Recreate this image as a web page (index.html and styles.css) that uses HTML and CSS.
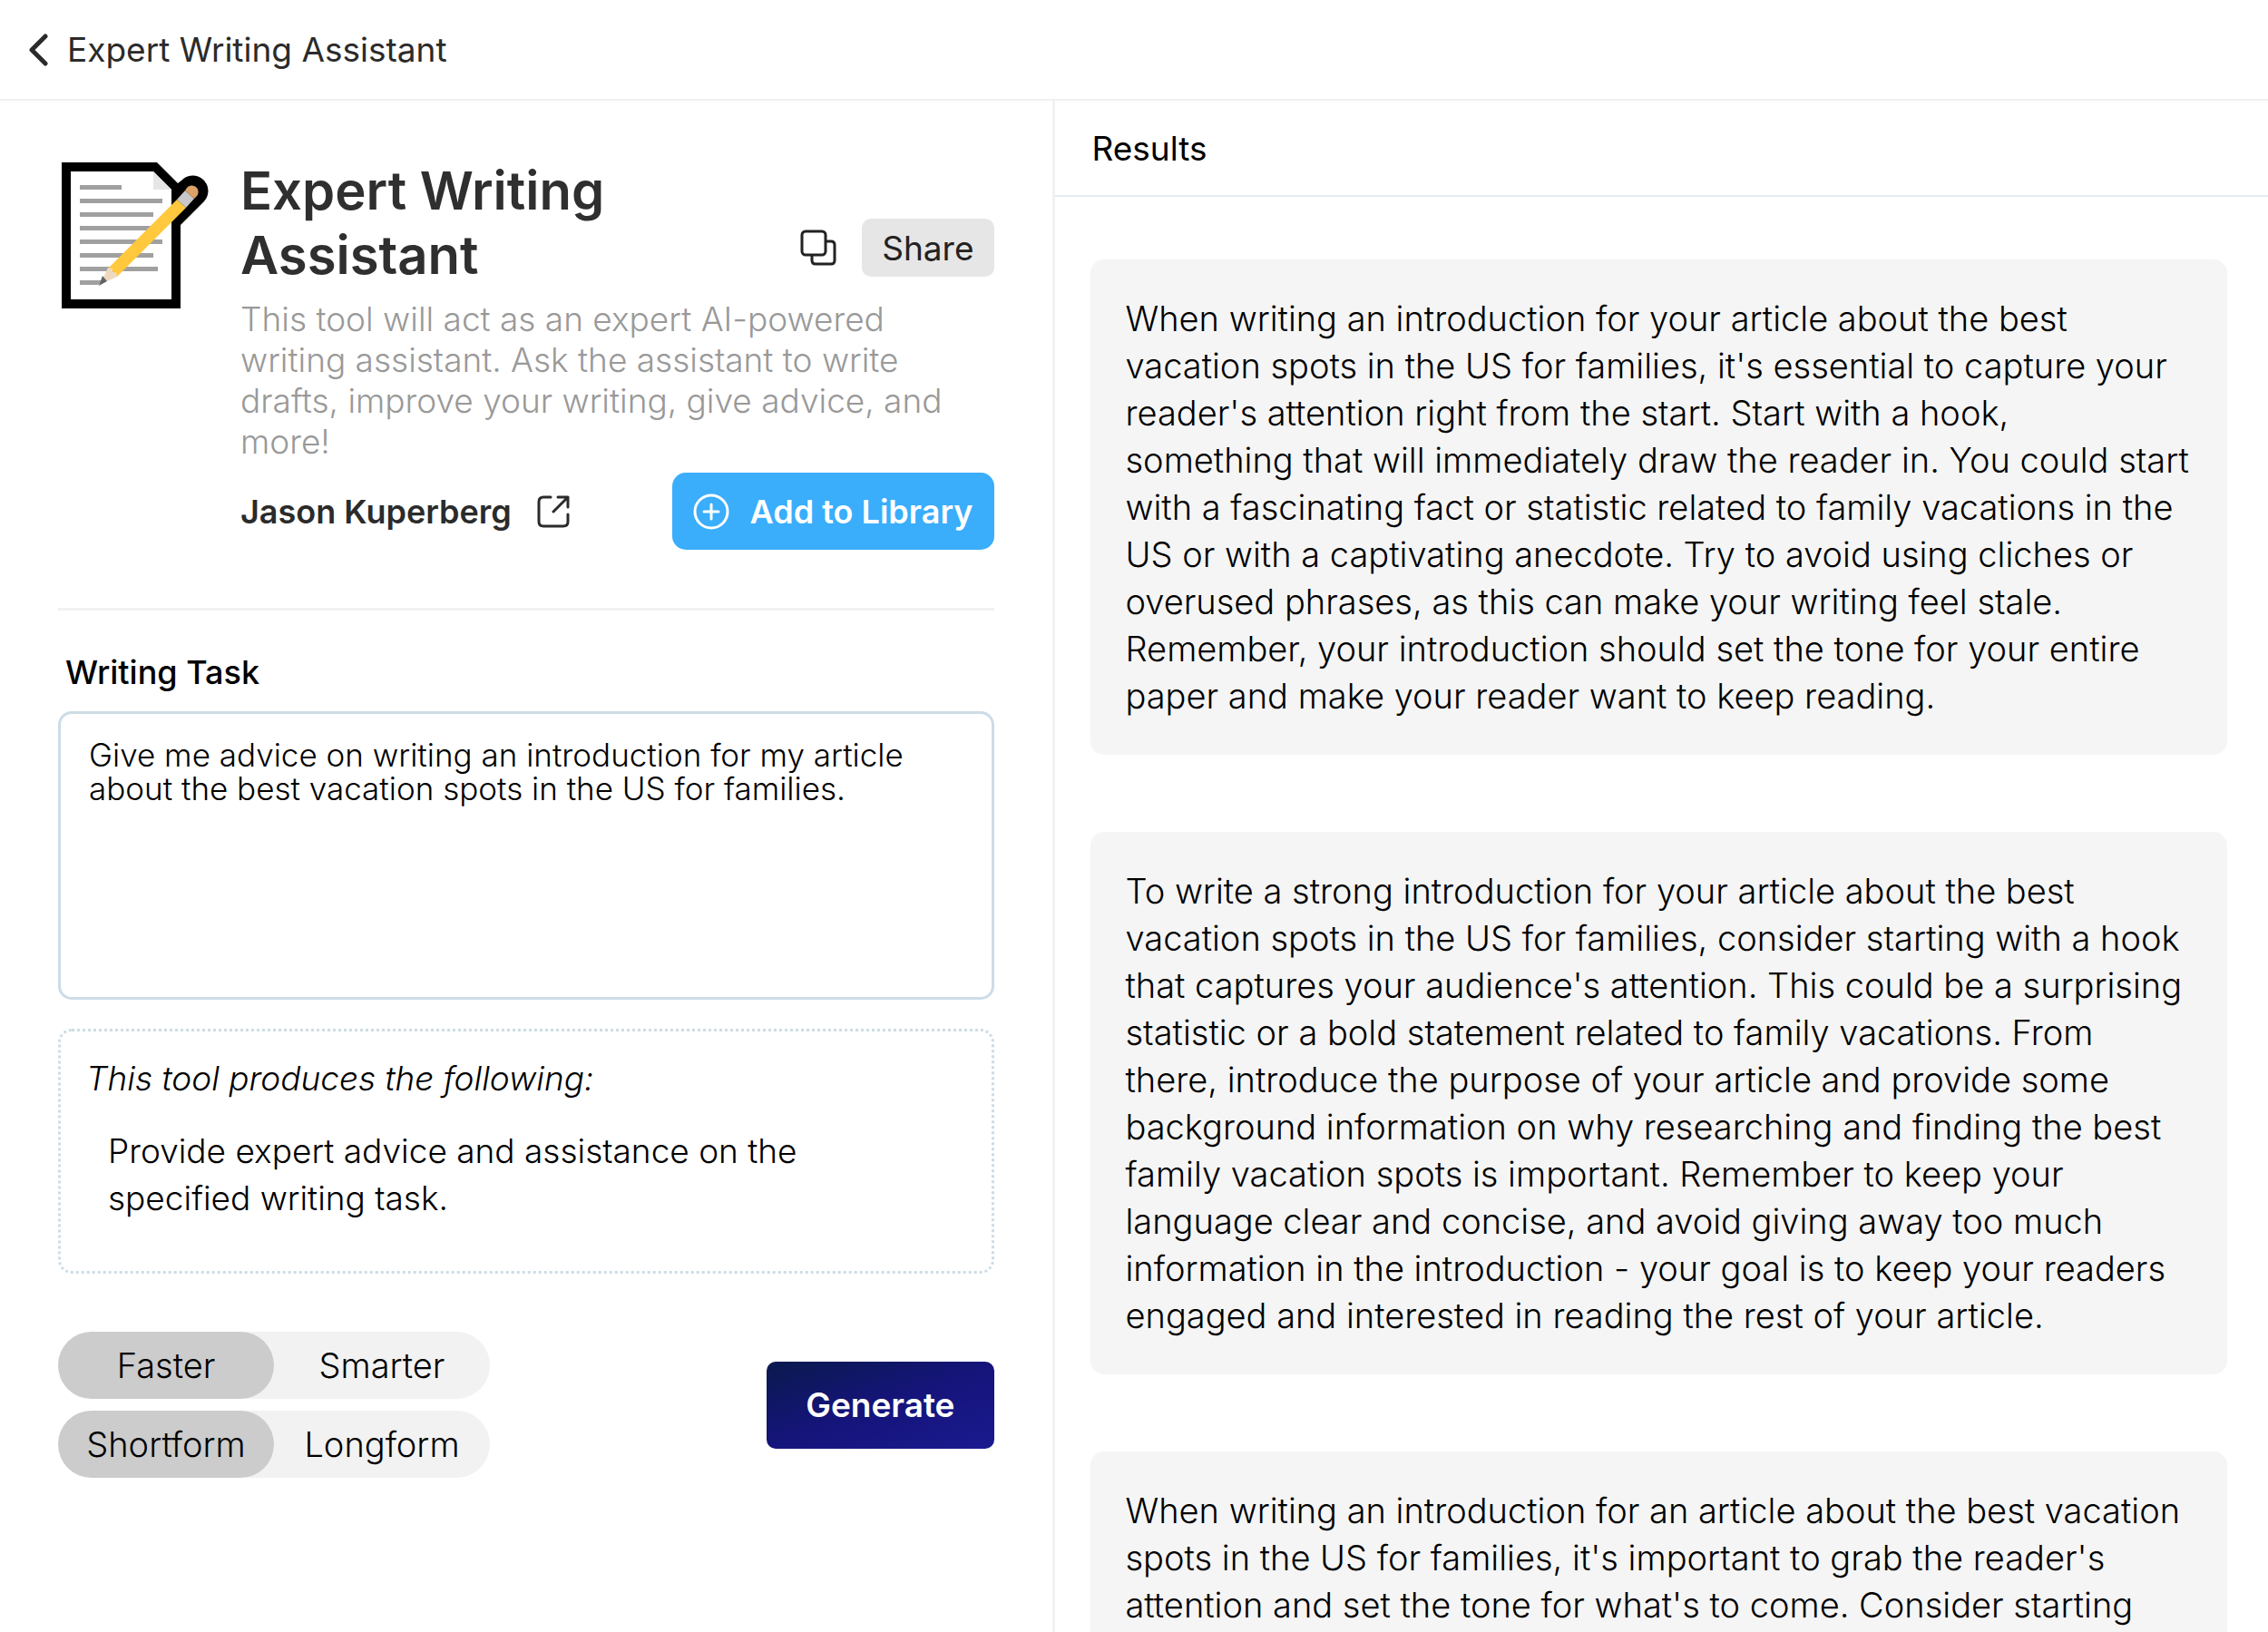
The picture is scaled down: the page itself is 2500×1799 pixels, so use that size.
FILE: index.html
```
<!DOCTYPE html>
<html lang="en">
<head>
    <meta charset="UTF-8">
    <meta name="viewport" content="width=device-width, initial-scale=1.0">
    <title>Expert Writing Assistant</title>
    <link rel="stylesheet" href="styles.css">
</head>
<body>

    <header class="topbar">
        <a href="#" class="back-link">
            <svg class="back-icon" viewBox="0 0 22 36" aria-hidden="true">
                <path d="M19 3 L4 18 L19 33" fill="none" stroke="currentColor" stroke-width="5" stroke-linecap="round" stroke-linejoin="round"/>
            </svg>
            <span>Expert Writing Assistant</span>
        </a>
    </header>

    <main class="layout">
        <section class="tool-panel">
            <div class="tool-header">
                <!-- Memo icon -->
                <svg class="tool-icon" viewBox="0 0 166 166" aria-hidden="true">
                    <path d="M4 4 H109 L132 27 L136 24 A16 16 0 0 1 161 47 L135 73 V165 H4 Z" fill="#000"/>
                    <path d="M14 14 H105 L125 34 V155 H14 Z" fill="#fff"/>
                    <path d="M105 14 L125 34 H105 Z" fill="#e6e6e6"/>
                    <path d="M24 29H70V34H24z M24 44H115V49H24z M24 59H105V64H24z M24 74H105V79H24z M24 89H115V94H24z M24 104H105V109H24z M24 119H110V124H24z M24 134H48L45 139H24z" fill="#a0a0a0"/>
                    <path d="M55 121 L131 45 L141 54 L65 130 Z" fill="#ffc83d"/>
                    <path d="M131 45 L140 35 L150 44 L141 54 Z" fill="#c8c8c8"/>
                    <path d="M140 35 L142 32 A7 7 0 0 1 153 41 L150 44 Z" fill="#dca267"/>
                    <path d="M49 133 L55 120 L60 121 L60 125 L64 125 L65 130 L54 135 Z" fill="#efd8c0"/>
                    <path d="M45 140 L49 129 L54 135 Z" fill="#636363"/>
                </svg>

                <div class="tool-info">
                    <div class="title-row">
                        <h1>Expert Writing Assistant</h1>
                        <div class="title-actions">
                            <button type="button" class="icon-btn" aria-label="Copy">
                                <svg class="copy-icon" viewBox="0 0 40 40" fill="none" stroke="currentColor" stroke-width="3" aria-hidden="true">
                                    <rect x="2" y="2" width="26" height="26" rx="4"/>
                                    <path d="M28 13 H34 Q38 13 38 17 V34 Q38 38 34 38 H17 Q13 38 13 34 V28"/>
                                </svg>
                            </button>
                            <button type="button" class="share-btn">Share</button>
                        </div>
                    </div>

                    <p class="description">This tool will act as an expert AI-powered writing assistant. Ask the assistant to write drafts, improve your writing, give advice, and more!</p>

                    <div class="author-row">
                        <a href="#" class="author">
                            <span>Jason Kuperberg</span>
                            <svg class="link-icon" viewBox="0 0 36 36" fill="none" stroke="currentColor" stroke-width="3" stroke-linecap="round" stroke-linejoin="round" aria-hidden="true">
                                <path d="M15 2 H7 Q2 2 2 7 V29 Q2 34 7 34 H29 Q34 34 34 29 V21"/>
                                <path d="M23 2 H34 V13 M34 2 L18 18"/>
                            </svg>
                        </a>
                        <button type="button" class="library-btn">
                            <svg class="plus-icon" viewBox="0 0 40 40" fill="none" stroke="currentColor" stroke-width="3" stroke-linecap="round" aria-hidden="true">
                                <circle cx="20" cy="20" r="18"/>
                                <path d="M20 12 V28 M12 20 H28"/>
                            </svg>
                            <span>Add to Library</span>
                        </button>
                    </div>
                </div>
            </div>

            <form class="tool-form">
                <label class="task-label" for="task">Writing Task</label>
                <textarea id="task" name="task">Give me advice on writing an introduction for my article about the best vacation spots in the US for families.</textarea>

                <div class="produces">
                    <p class="produces-title">This tool produces the following:</p>
                    <p class="produces-text">Provide expert advice and assistance on the specified writing task.</p>
                </div>

                <div class="form-footer">
                    <div class="toggles">
                        <div class="toggle">
                            <input type="radio" id="faster" name="speed" checked>
                            <label for="faster">Faster</label>
                            <input type="radio" id="smarter" name="speed">
                            <label for="smarter">Smarter</label>
                        </div>
                        <div class="toggle">
                            <input type="radio" id="shortform" name="length" checked>
                            <label for="shortform">Shortform</label>
                            <input type="radio" id="longform" name="length">
                            <label for="longform">Longform</label>
                        </div>
                    </div>
                    <button type="submit" class="generate-btn">Generate</button>
                </div>
            </form>
        </section>

        <section class="results-panel">
            <h2>Results</h2>
            <div class="results">
                <article class="result">When writing an introduction for your article about the best vacation spots in the US for families, it's essential to capture your reader's attention right from the start. Start with a hook,<br> something that will immediately draw the reader in. You could start with a fascinating fact or statistic related to family vacations in the US or with a captivating anecdote. Try to avoid using cliches or overused phrases, as this can make your writing feel stale. Remember, your introduction should set the tone for your entire paper and make your reader want to keep reading.</article>
                <article class="result">To write a strong introduction for your article about the best vacation spots in the US for families, consider starting with a hook that captures your audience's attention. This could be a surprising statistic or a bold statement related to family vacations. From<br> there, introduce the purpose of your article and provide some background information on why researching and finding the best family vacation spots is important. Remember to keep your language clear and concise, and avoid giving away too much information in the introduction - your goal is to keep your readers engaged and interested in reading the rest of your article.</article>
                <article class="result">When writing an introduction for an article about the best vacation spots in the US for families, it's important to grab the reader's attention and set the tone for what's to come. Consider starting</article>
            </div>
        </section>
    </main>

</body>
</html>
```

FILE: styles.css
```
/* Base styles */
* {
    box-sizing: border-box;
}

body {
    font-family: 'Inter', sans-serif;
    font-optical-sizing: none;
    font-size: 37px;
    font-weight: 300;
    color: #000;
    background: #fff;
    margin: 0;
    height: 100vh;
    display: flex;
    flex-direction: column;
    overflow: hidden;
}

h1, h2, p {
    margin: 0;
}

button, textarea {
    font: inherit;
    color: inherit;
}

button {
    border: none;
    cursor: pointer;
}

a {
    color: inherit;
    text-decoration: none;
}

svg {
    display: block;
    flex-shrink: 0;
}

/* Top bar */
.topbar {
    flex-shrink: 0;
    padding: 32px 31px;
    border-bottom: 2px solid #f1f1f1;
}

.back-link {
    display: flex;
    align-items: center;
    gap: 21px;
    font-weight: 400;
    line-height: 45px;
    color: #2b2b2b;
}

.back-icon {
    width: 22px;
    height: 36px;
}

.layout {
    flex: 1;
    min-height: 0;
    display: flex;
}

/* Left panel */
.tool-panel {
    flex: 0 0 46.5%;
    padding: 64px;
    border-right: 3px solid #f1f1f1;
}

.tool-header {
    display: flex;
    gap: 35px;
    padding-bottom: 64px;
    border-bottom: 3px solid #f1f1f1;
}

.tool-icon {
    width: 166px;
    height: 166px;
}

.tool-info {
    flex: 1;
}

.title-row {
    display: flex;
    justify-content: space-between;
    align-items: flex-end;
    margin-bottom: 12px;
}

h1 {
    flex: 1;
    font-size: 58px;
    font-weight: 600;
    line-height: 71px;
    color: #2f2f2f;
}

.title-actions {
    display: flex;
    align-items: center;
    gap: 28px;
    padding-bottom: 12px;
}

.icon-btn {
    padding: 0;
    background: none;
    color: #222;
}

.copy-icon {
    width: 40px;
    height: 40px;
}

.share-btn {
    height: 64px;
    padding: 0 22px;
    border-radius: 10px;
    background: #e6e6e6;
    font-weight: 400;
    color: #222;
}

.description {
    line-height: 45px;
    color: #999;
}

.author-row {
    display: flex;
    justify-content: space-between;
    align-items: center;
    margin-top: 12px;
}

.author {
    display: flex;
    align-items: center;
    gap: 28px;
    font-size: 36px;
    font-weight: 600;
    color: #2b2b2b;
}

.link-icon {
    width: 36px;
    height: 36px;
}

.library-btn {
    display: flex;
    align-items: center;
    gap: 23px;
    height: 85px;
    padding: 0 23px;
    border-radius: 15px;
    background: #3aadfb;
    font-size: 36px;
    font-weight: 600;
    color: #fff;
}

.plus-icon {
    width: 40px;
    height: 40px;
}

/* Form */
.task-label {
    display: block;
    margin: 46px 8px 20px;
    font-size: 36px;
    font-weight: 500;
    line-height: 45px;
}

textarea {
    display: block;
    width: 100%;
    height: 318px;
    padding: 27px 31px;
    border: 3px solid #cddce6;
    border-radius: 15px;
    background: #fff;
    font-size: 35px;
    line-height: 37px;
    resize: none;
}

.produces {
    margin-top: 32px;
    padding: 26px 28px 54px;
    border: 3px dotted #cddce6;
    border-radius: 15px;
    line-height: 52px;
}

.produces-title {
    margin-bottom: 28px;
    font-style: italic;
}

.produces-text {
    padding: 0 24px;
}

.form-footer {
    display: flex;
    justify-content: space-between;
    align-items: center;
    margin-top: 64px;
}

.toggles {
    display: flex;
    flex-direction: column;
    gap: 13px;
}

.toggle {
    display: flex;
    border-radius: 37px;
    background: #f2f2f2;
}

.toggle input {
    appearance: none;
    position: absolute;
    margin: 0;
}

.toggle label {
    width: 238px;
    border-radius: 37px;
    font-size: 38px;
    line-height: 74px;
    text-align: center;
    cursor: pointer;
}

.toggle input:checked + label {
    background: #ccc;
}

.generate-btn {
    height: 96px;
    padding: 0 43px;
    border-radius: 10px;
    background: linear-gradient(160deg, #0a1a4e 0%, #15147a 50%, #1a1a90 100%);
    font-weight: 600;
    color: #fff;
}

/* Results */
.results-panel {
    flex: 1;
    min-width: 0;
}

h2 {
    padding: 31px 41px 29px;
    border-bottom: 2px solid #e6edf3;
    font-size: 37px;
    font-weight: 400;
    line-height: 44px;
}

.results {
    display: flex;
    flex-direction: column;
    gap: 85px;
    padding: 69px 45px 69px 39px;
}

.result {
    padding: 39px 32px 39px 39px;
    border-radius: 15px;
    background: #f5f5f5;
    font-size: 38px;
    line-height: 52px;
}
```
